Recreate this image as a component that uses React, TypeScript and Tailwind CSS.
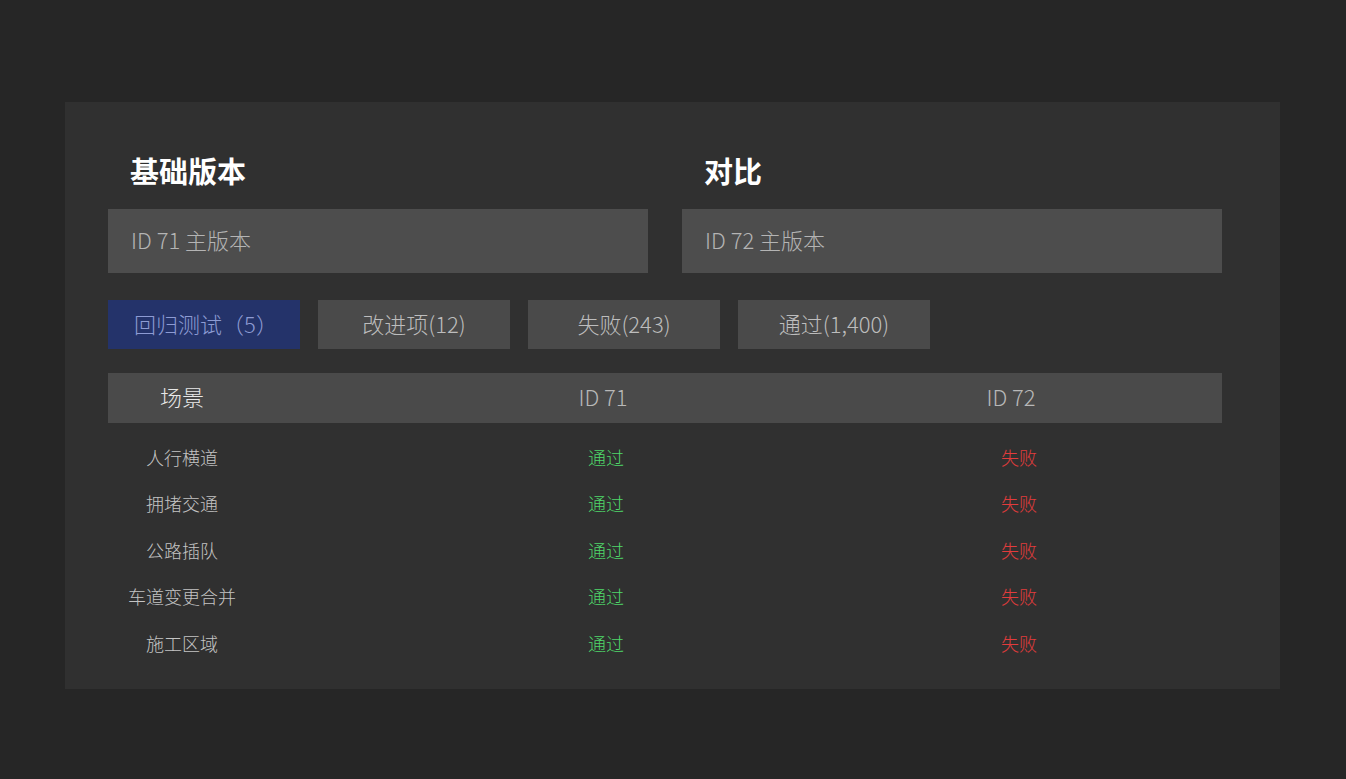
const TABS = [
  { label: "回归测试（5）", active: true },
  { label: "改进项(12)", active: false },
  { label: "失败(243)", active: false },
  { label: "通过(1,400)", active: false },
];

const ROWS = ["人行横道", "拥堵交通", "公路插队", "车道变更合并", "施工区域"];

const FONT = { fontFamily: '"Noto Sans CJK SC", "Noto Sans", sans-serif' };

function VersionField({ title, value }: { title: string; value: string }) {
  return (
    <div className="flex w-[540px] flex-col">
      <h2 className="h-[44px] pl-[22px] text-[29px] font-semibold leading-[38px] text-white">
        {title}
      </h2>
      <div className="mt-[14px] flex h-[64px] items-center bg-[#4d4d4d] px-[23px] pb-[3px] text-[22px] font-light text-[#b4b4b4]">
        {value}
      </div>
    </div>
  );
}

export default function App() {
  return (
    <div className="min-h-[779px] w-full bg-[#262626] pl-[65px] pt-[102px]" style={FONT}>
      <div className="flex w-[1215px] flex-col bg-[#303030] pl-[43px] pt-[49px] pb-[22px]">
        <div className="flex w-[1114px] justify-between">
          <VersionField title="基础版本" value="ID 71 主版本" />
          <VersionField title="对比" value="ID 72 主版本" />
        </div>

        <div className="mt-[27px] flex gap-[18px]">
          {TABS.map((t) => (
            <button
              key={t.label}
              className={
                t.active
                  ? "flex h-[49px] w-[192px] items-center justify-center bg-[#24336a] pb-[2px] pl-[4px] text-[22px] font-light text-[#8d9bd3]"
                  : "flex h-[49px] w-[192px] items-center justify-center bg-[#4a4a4a] pb-[2px] text-[22px] font-light text-[#bdbdbd]"
              }
            >
              {t.label}
            </button>
          ))}
        </div>

        <div className="mt-[24px] w-[1114px]">
          <div className="grid h-[50px] grid-cols-[148px_694px_122px_1fr] items-center bg-[#4a4a4a] pb-[3px] text-[22px] font-light">
            <div className="text-center text-[#e8e8e8]">场景</div>
            <div className="text-center text-[#b8b8b8]">ID 71</div>
            <div className="text-center text-[#b8b8b8]">ID 72</div>
            <div />
          </div>
          <div className="pt-[11px]">
            {ROWS.map((r) => (
              <div
                key={r}
                className="grid h-[46.5px] grid-cols-[148px_700px_126px_1fr] items-center text-[18px] font-light"
              >
                <div className="text-center text-[#c4c4c4]">{r}</div>
                <div className="text-center text-[#4fd86a]">通过</div>
                <div className="text-center text-[#e23c3c]">失败</div>
                <div />
              </div>
            ))}
          </div>
        </div>
      </div>
    </div>
  );
}
